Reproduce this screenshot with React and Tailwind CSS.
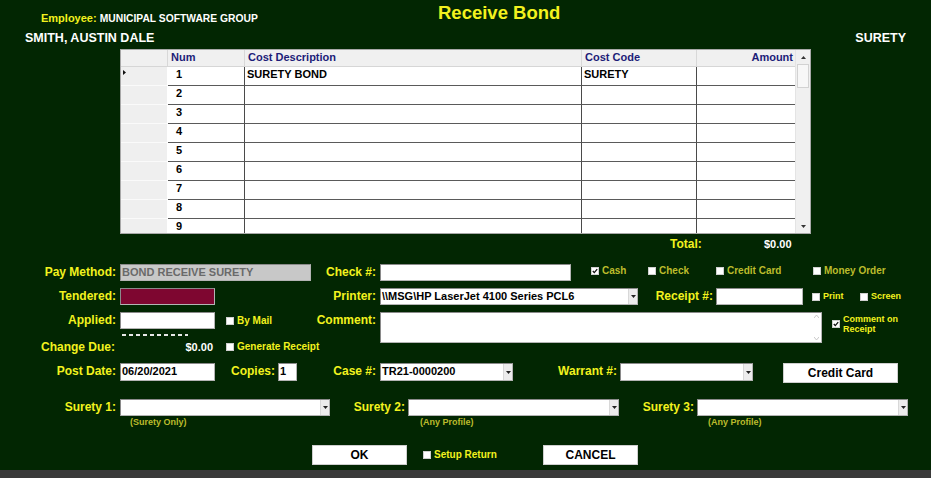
import React from "react";

const Y = "text-[#f2f21e]";
const OLIVE = "text-[#bcbc2c]";

function Check({ checked }) {
  return (
    <span className="inline-flex w-[8px] h-[8px] bg-white border border-[#cfcfcf] items-center justify-center shrink-0">
      {checked && (
        <svg width="6" height="6" viewBox="0 0 6 6">
          <path d="M0.8 3 L2.3 4.6 L5.2 1.2" stroke="#111" strokeWidth="1.3" fill="none" />
        </svg>
      )}
    </span>
  );
}

function CB({ label, checked, color = Y, w, size = "text-[10px]" }) {
  return (
    <div className={`flex items-center gap-[3px] ${w || ""}`}>
      <Check checked={checked} />
      <span className={`${color} ${size} font-bold leading-none`}>{label}</span>
    </div>
  );
}

function Label({ children, w, size = "text-[12px]" }) {
  return (
    <div className={`${w} shrink-0 text-right ${Y} ${size} font-bold leading-[17px] h-[17px] whitespace-nowrap`}>
      {children}
    </div>
  );
}

function Input({ w, h = "h-[17px]", value, bg = "bg-white", color = "text-black" }) {
  return (
    <div
      className={`${w} ${h} ${bg} shrink-0 border border-[#b4b4b4] border-t-[#8a8a8a] border-l-[#8a8a8a] px-[1px] text-[11px] font-bold ${color} leading-[15px] whitespace-nowrap overflow-hidden`}
    >
      {value}
    </div>
  );
}

function Select({ w, h = "h-[17px]", value }) {
  return (
    <div
      className={`${w} ${h} shrink-0 bg-white border border-[#b4b4b4] border-t-[#8a8a8a] border-l-[#8a8a8a] flex items-stretch`}
    >
      <div className="flex-1 px-[1px] text-[11px] font-bold text-black leading-[15px] whitespace-nowrap overflow-hidden">
        {value}
      </div>
      <div className="w-[9px] bg-[#ececec] border-l border-[#d8d8d8] flex items-center justify-center">
        <svg width="5" height="3" viewBox="0 0 5 3">
          <path d="M0 0 H5 L2.5 3 Z" fill="#222" />
        </svg>
      </div>
    </div>
  );
}

function Button({ w, children }) {
  return (
    <div
      className={`${w} h-[20px] shrink-0 bg-white border border-[#cfcfcf] flex items-center justify-center text-[12px] font-bold text-black leading-none`}
    >
      {children}
    </div>
  );
}

const rows = [1, 2, 3, 4, 5, 6, 7, 8, 9];

function Grid() {
  return (
    <div className="ml-[120px] w-[691px] h-[185px] flex border border-[#a8a8a8] bg-[#f0f0f0] overflow-hidden">
      <div className="flex flex-col w-[674px] overflow-hidden">
        <div className="flex h-[17px] shrink-0 bg-[#f0f0f0] border-b border-[#d6d6d6] text-[11px] font-bold text-[#1c1c78] leading-[15px]">
          <div className="w-[47px] border-r border-[#d8d8d8]" />
          <div className="w-[77px] border-r border-[#d8d8d8] pl-[3px]">Num</div>
          <div className="w-[337px] border-r border-[#d8d8d8] pl-[3px]">Cost Description</div>
          <div className="w-[115px] border-r border-[#d8d8d8] pl-[3px]">Cost Code</div>
          <div className="w-[98px] text-right pr-[2px]">Amount</div>
        </div>
        {rows.map((n) => (
          <div key={n} className="flex h-[19px] shrink-0 text-[11px] font-bold text-black leading-[15px]">
            <div className="w-[47px] bg-[#efefef] border-b border-[#fafafa] border-r border-r-[#ffffff] relative">
              {n === 1 && (
                <svg className="absolute left-[2px] top-[3px]" width="3" height="5" viewBox="0 0 3 5">
                  <path d="M0 0 L3 2.5 L0 5 Z" fill="#111" />
                </svg>
              )}
            </div>
            <div className="w-[77px] bg-white border-b border-[#5a5a5a] border-r border-r-[#4a4a4a] pl-[8px]">{n}</div>
            <div className="w-[337px] bg-white border-b border-[#5a5a5a] border-r border-r-[#4a4a4a] pl-[2px]">
              {n === 1 ? "SURETY BOND" : ""}
            </div>
            <div className="w-[115px] bg-white border-b border-[#5a5a5a] border-r border-r-[#4a4a4a] pl-[2px]">
              {n === 1 ? "SURETY" : ""}
            </div>
            <div className="w-[98px] bg-white border-b border-[#5a5a5a]" />
          </div>
        ))}
      </div>
      <div className="w-[15px] bg-[#f0f0f0] border-l border-[#e4e4e4] flex flex-col">
        <div className="h-[14px] flex items-center justify-center">
          <svg width="5" height="3" viewBox="0 0 5 3">
            <path d="M0 3 H5 L2.5 0 Z" fill="#333" />
          </svg>
        </div>
        <div className="h-[24px] mx-[1px] bg-[#f7f7f7] border border-[#d2d2d2]" />
        <div className="flex-1" />
        <div className="h-[14px] flex items-center justify-center">
          <svg width="5" height="3" viewBox="0 0 5 3">
            <path d="M0 0 H5 L2.5 3 Z" fill="#333" />
          </svg>
        </div>
      </div>
    </div>
  );
}

export default function App() {
  return (
    <div className="w-[931px] h-[478px] bg-[#022602] flex flex-col overflow-hidden font-['Liberation_Sans',Arial,sans-serif]">
      {/* top */}
      <div className="flex h-[28px] shrink-0">
        <div className="w-[438px] pl-[41px] pt-[12.5px] text-[11px] font-bold leading-none whitespace-nowrap">
          <span className={Y}>Employee: </span>
          <span className="text-white text-[10.3px]">MUNICIPAL SOFTWARE GROUP</span>
        </div>
        <div className={`pt-[4px] text-[18.5px] font-bold leading-none ${Y}`}>Receive Bond</div>
      </div>
      <div className="flex justify-between h-[21px] shrink-0 pl-[25px] pr-[25px] pt-[4px] text-white text-[12.5px] font-bold leading-none">
        <span>SMITH, AUSTIN DALE</span>
        <span>SURETY</span>
      </div>

      <Grid />

      {/* total */}
      <div className="flex h-[30px] shrink-0 pt-[4px] leading-none font-bold">
        <div className={`ml-[670px] w-[94px] text-[12px] ${Y}`}>Total:</div>
        <div className="text-white text-[11px] pt-[1px]">$0.00</div>
      </div>

      {/* row 1 */}
      <div className="flex items-start h-[24px] shrink-0">
        <Label w="w-[116px]">Pay Method:</Label>
        <div className="ml-[4px]">
          <Input w="w-[191px]" bg="bg-[#c8c8c8]" color="text-[#6a6a6a]" value="BOND RECEIVE SURETY" />
        </div>
        <Label w="w-[65px]">Check #:</Label>
        <div className="ml-[4px]">
          <Input w="w-[191px]" value="" />
        </div>
        <div className="ml-[20px] flex items-center h-[14px]">
          <CB label="Cash" checked color={OLIVE} w="w-[57px]" />
          <CB label="Check" color={OLIVE} w="w-[68px]" />
          <CB label="Credit Card" color={OLIVE} w="w-[97px]" />
          <CB label="Money Order" color={OLIVE} />
        </div>
      </div>

      {/* row 2 */}
      <div className="flex items-start h-[24px] shrink-0">
        <Label w="w-[116px]">Tendered:</Label>
        <div className="ml-[4px]">
          <Input w="w-[95px]" bg="bg-[#7e0630]" value="" />
        </div>
        <Label w="w-[161px]">Printer:</Label>
        <div className="ml-[4px]">
          <Select w="w-[258px]" value="\\MSG\HP LaserJet 4100 Series PCL6" />
        </div>
        <Label w="w-[75px]">Receipt #:</Label>
        <div className="ml-[3px]">
          <Input w="w-[87px]" value="" />
        </div>
        <div className="ml-[9px] flex items-center h-[17px]">
          <CB label="Print" w="w-[48px]" size="text-[9px]" />
          <CB label="Screen" size="text-[9px]" />
        </div>
      </div>

      {/* row 3 */}
      <div className="flex items-start h-[28px] shrink-0">
        <Label w="w-[116px]">Applied:</Label>
        <div className="ml-[4px] flex flex-col">
          <Input w="w-[95px]" value="" />
          <div className="mt-[5px] ml-[2px] w-[66px] h-[2px] bg-[repeating-linear-gradient(90deg,#e8e8e8_0_4px,transparent_4px_7px)]" />
        </div>
        <div className="ml-[11px] flex items-center h-[17px] w-[69px]">
          <CB label="By Mail" />
        </div>
        <Label w="w-[81px]">Comment:</Label>
        <div className="ml-[4px] w-[442px] h-[31px] shrink-0 bg-white border border-[#b4b4b4] border-t-[#8a8a8a] border-l-[#8a8a8a] flex justify-end">
          <div className="w-[10px] flex flex-col justify-between items-center py-[2px]">
            <svg width="5" height="3" viewBox="0 0 5 3">
              <path d="M0 3 L2.5 0 L5 3" stroke="#bbb" fill="none" strokeWidth="0.8" />
            </svg>
            <svg width="5" height="3" viewBox="0 0 5 3">
              <path d="M0 0 L2.5 3 L5 0" stroke="#bbb" fill="none" strokeWidth="0.8" />
            </svg>
          </div>
        </div>
        <div className="ml-[10px] mt-[2px] flex items-center gap-[3px]">
          <Check checked />
          <span className={`${Y} text-[9px] font-bold leading-[10px]`}>
            Comment on
            <br />
            Receipt
          </span>
        </div>
      </div>

      {/* change due */}
      <div className="flex items-start h-[23px] shrink-0 pt-[1px]">
        <div className={`ml-[41px] w-[120px] text-[12px] font-bold leading-[12px] ${Y}`}>Change Due:</div>
        <div className="w-[52px] text-right text-white text-[11px] font-bold leading-[12px]">$0.00</div>
        <div className="ml-[13px] flex items-center h-[12px]">
          <CB label="Generate Receipt" />
        </div>
      </div>

      {/* post date row */}
      <div className="flex items-start h-[36px] shrink-0">
        <Label w="w-[116px]">Post Date:</Label>
        <div className="ml-[4px]">
          <Input w="w-[95px]" h="h-[18px]" value="06/20/2021" />
        </div>
        <Label w="w-[60px]">Copies:</Label>
        <div className="ml-[3px]">
          <Input w="w-[19px]" h="h-[18px]" value="1" />
        </div>
        <Label w="w-[79px]">Case #:</Label>
        <div className="ml-[4px]">
          <Select w="w-[133px]" h="h-[18px]" value="TR21-0000200" />
        </div>
        <Label w="w-[104px]">Warrant #:</Label>
        <div className="ml-[3px]">
          <Select w="w-[133px]" h="h-[18px]" value="" />
        </div>
        <div className="ml-[30px]">
          <Button w="w-[115px]">Credit Card</Button>
        </div>
      </div>

      {/* surety row */}
      <div className="flex items-start h-[17px] shrink-0">
        <Label w="w-[116px]">Surety 1:</Label>
        <div className="ml-[4px]">
          <Select w="w-[210px]" value="" />
        </div>
        <Label w="w-[75px]">Surety 2:</Label>
        <div className="ml-[3px]">
          <Select w="w-[211px]" value="" />
        </div>
        <Label w="w-[75px]">Surety 3:</Label>
        <div className="ml-[3px]">
          <Select w="w-[211px]" value="" />
        </div>
      </div>
      <div className={`flex h-[29px] shrink-0 pt-[2px] text-[9px] font-bold leading-none ${OLIVE}`}>
        <div className="ml-[130px] w-[290px]">(Surety Only)</div>
        <div className="w-[288px]">(Any Profile)</div>
        <div>(Any Profile)</div>
      </div>

      {/* buttons */}
      <div className="flex items-start h-[25px] shrink-0">
        <div className="ml-[312px]">
          <Button w="w-[95px]">OK</Button>
        </div>
        <div className="ml-[16px] w-[120px] flex items-center h-[20px]">
          <CB label="Setup Return" />
        </div>
        <Button w="w-[95px]">CANCEL</Button>
      </div>

      <div className="h-[8px] shrink-0 bg-[#3a3a3a]" />
    </div>
  );
}
